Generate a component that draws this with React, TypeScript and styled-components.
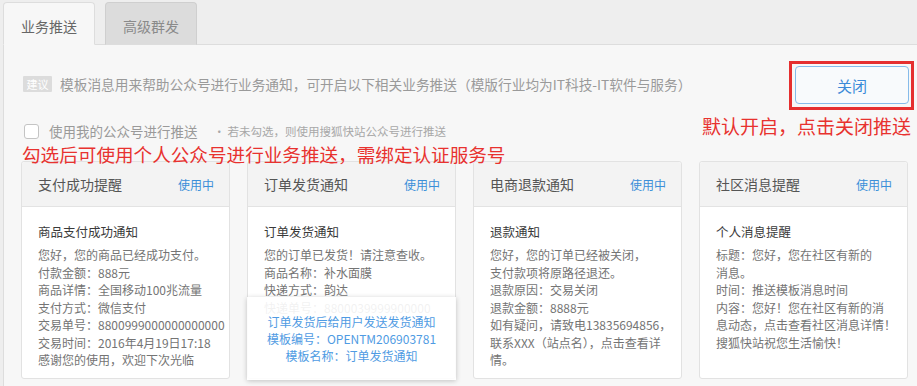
import React from 'react';
import styled, { createGlobalStyle } from 'styled-components';

const GlobalStyle = createGlobalStyle`
  html, body {
    margin: 0;
    padding: 0;
    background: #eeeeee;
    overflow: hidden;
  }
  body {
    font-family: "Noto Sans CJK SC", "Liberation Sans", sans-serif;
  }
`;

const Page = styled.div`
  width: 917px;
  height: 386px;
  padding: 2px 0 0 3px;
  box-sizing: border-box;
  overflow: hidden;
`;

const TabBar = styled.div`
  display: flex;
  gap: 10px;
  height: 43px;
  position: relative;
  z-index: 1;
`;

const Tab = styled.div<{ $active?: boolean }>`
  width: 92px;
  height: 43px;
  box-sizing: border-box;
  border: 1px solid ${p => (p.$active ? '#dddddd' : '#cfcfcf')};
  border-bottom: ${p => (p.$active ? '1px solid #f7f7f7' : '1px solid #dddddd')};
  border-radius: 4px 4px 0 0;
  background: ${p => (p.$active ? '#f7f7f7' : '#dcdcdc')};
  color: ${p => (p.$active ? '#666666' : '#8a8a8a')};
  font-size: 14px;
  display: flex;
  align-items: center;
  justify-content: center;
  padding-top: 4px;
`;

const Panel = styled.div`
  width: 940px;
  height: 360px;
  box-sizing: border-box;
  margin-top: -1px;
  border: 1px solid #dddddd;
  background: #f7f7f7;
  padding: 16px 0 0 19px;
`;

const TopSection = styled.div`
  display: flex;
  justify-content: space-between;
  align-items: flex-start;
  width: 894px;
`;

const LeftCol = styled.div`
  display: flex;
  flex-direction: column;
  padding-top: 13px;
`;

const InfoLine = styled.div`
  display: flex;
  align-items: center;
  height: 20px;
  font-size: 13.7px;
  color: #9a9a9a;
  gap: 8px;
  white-space: nowrap;
`;

const Badge = styled.span`
  display: inline-flex;
  align-items: center;
  justify-content: center;
  width: 29px;
  height: 16px;
  background: #dcdcdc;
  color: #ffffff;
  font-size: 11px;
  border-radius: 1px;
`;

const CheckRow = styled.label`
  display: flex;
  align-items: center;
  height: 20px;
  margin-top: 27px;
  font-size: 13.5px;
  color: #9a9a9a;
  white-space: nowrap;
`;

const CheckBox = styled.span`
  width: 13px;
  height: 13px;
  border: 1px solid #c4c4c4;
  border-radius: 3px;
  background: #ffffff;
  margin-right: 10px;
  margin-left: 1px;
`;

const Hint = styled.span`
  font-size: 11.5px;
  color: #a8a8a8;
  margin-left: 16px;
`;

const RedNote = styled.div<{ $right?: boolean }>`
  position: relative;
  z-index: 2;
  color: #e8322f;
  font-size: ${p => (p.$right ? '19px' : '18.6px')};
  line-height: ${p => (p.$right ? '24px' : '16px')};
  margin-top: ${p => (p.$right ? '4px' : '5px')};
  margin-left: ${p => (p.$right ? '0' : '-1px')};
  margin-right: ${p => (p.$right ? '6px' : '0')};
  white-space: nowrap;
`;

const RightCol = styled.div`
  display: flex;
  flex-direction: column;
  align-items: flex-end;
`;

const Marked = styled.div`
  border: 3px solid #e52f2f;
  padding: 2px 2px 3px 3px;
  margin-right: 3px;
`;

const CloseButton = styled.button`
  width: 114px;
  height: 38px;
  border: 1px solid #86bbea;
  border-radius: 4px;
  background: #f8fafc;
  color: #3b8ad8;
  font-family: inherit;
  font-size: 15px;
  display: block;
  padding: 0;
`;

const Cards = styled.div`
  display: flex;
  gap: 17px;
  margin-top: -1px;
  margin-left: -2px;
`;

const Card = styled.div`
  position: relative;
  width: 209px;
  height: 218px;
  box-sizing: border-box;
  border: 1px solid #e2e2e2;
  border-radius: 3px;
  background: #ffffff;
`;

const CardHead = styled.div`
  height: 45px;
  box-sizing: border-box;
  display: flex;
  align-items: center;
  justify-content: space-between;
  padding: 0 15px 0 16px;
  background: #f3f3f3;
  border-bottom: 1px solid #e3e3e3;
  border-radius: 3px 3px 0 0;
`;

const CardTitle = styled.span`
  font-size: 14px;
  color: #555555;
`;

const Status = styled.span`
  font-size: 12px;
  color: #3b8fd9;
`;

const CardBody = styled.div`
  padding: 16px 0 0 16px;
  white-space: nowrap;
`;

const BodyTitle = styled.div`
  font-size: 12.5px;
  line-height: 18px;
  color: #3a3a3a;
  margin-bottom: 5px;
`;

const BodyLine = styled.div`
  font-size: 12px;
  line-height: 17.5px;
  color: #747474;
`;

// hover tip lying over the lower part of a card
const Popup = styled.div`
  position: absolute;
  left: -1px;
  right: -1px;
  bottom: -2px;
  height: 83px;
  box-sizing: border-box;
  padding-top: 16px;
  background: rgba(255, 255, 255, 0.9);
  box-shadow: 0 1px 5px rgba(0, 0, 0, 0.22);
  text-align: center;
`;

const PopupLine = styled.div`
  font-size: 12px;
  line-height: 17px;
  color: #4f9be3;
`;

type CardData = {
  name: string;
  title: string;
  lines: string[];
  popup?: string[];
};

const cards: CardData[] = [
  {
    name: '支付成功提醒',
    title: '商品支付成功通知',
    lines: [
      '您好，您的商品已经成功支付。',
      '付款金额：888元',
      '商品详情：全国移动100兆流量',
      '支付方式：微信支付',
      '交易单号：8800999000000000000',
      '交易时间：2016年4月19日17:18',
      '感谢您的使用，欢迎下次光临',
    ],
  },
  {
    name: '订单发货通知',
    title: '订单发货通知',
    lines: [
      '您的订单已发货！请注意查收。',
      '商品名称：补水面膜',
      '快递方式：韵达',
      '快递单号：8800039999900000',
    ],
    popup: ['订单发货后给用户发送发货通知', '模板编号：OPENTM206903781', '模板名称：订单发货通知'],
  },
  {
    name: '电商退款通知',
    title: '退款通知',
    lines: [
      '您好，您的订单已经被关闭，',
      '支付款项将原路径退还。',
      '退款原因：交易关闭',
      '退款金额：8888元',
      '如有疑问，请致电13835694856，',
      '联系XXX（站点名），点击查看详',
      '情。',
    ],
  },
  {
    name: '社区消息提醒',
    title: '个人消息提醒',
    lines: [
      '标题：您好，您在社区有新的',
      '消息。',
      '时间：推送模板消息时间',
      '内容：您好！您在社区有新的消',
      '息动态，点击查看社区消息详情！',
      '搜狐快站祝您生活愉快！',
    ],
  },
];

export default function App() {
  return (
    <>
      <GlobalStyle />
      <Page>
        <TabBar>
          <Tab $active>业务推送</Tab>
          <Tab>高级群发</Tab>
        </TabBar>
        <Panel>
          <TopSection>
            <LeftCol>
              <InfoLine>
                <Badge>建议</Badge>
                模板消息用来帮助公众号进行业务通知，可开启以下相关业务推送（模版行业均为IT科技-IT软件与服务）
              </InfoLine>
              <CheckRow>
                <CheckBox />
                使用我的公众号进行推送
                <Hint>• 若未勾选，则使用搜狐快站公众号进行推送</Hint>
              </CheckRow>
              <RedNote>勾选后可使用个人公众号进行业务推送，需绑定认证服务号</RedNote>
            </LeftCol>
            <RightCol>
              <Marked>
                <CloseButton>关闭</CloseButton>
              </Marked>
              <RedNote $right>默认开启，点击关闭推送</RedNote>
            </RightCol>
          </TopSection>
          <Cards>
            {cards.map(c => (
              <Card key={c.name}>
                <CardHead>
                  <CardTitle>{c.name}</CardTitle>
                  <Status>使用中</Status>
                </CardHead>
                <CardBody>
                  <BodyTitle>{c.title}</BodyTitle>
                  {c.lines.map((l, i) => (
                    <BodyLine key={i}>{l}</BodyLine>
                  ))}
                </CardBody>
                {c.popup && (
                  <Popup>
                    {c.popup.map((l, i) => (
                      <PopupLine key={i}>{l}</PopupLine>
                    ))}
                  </Popup>
                )}
              </Card>
            ))}
          </Cards>
        </Panel>
      </Page>
    </>
  );
}
